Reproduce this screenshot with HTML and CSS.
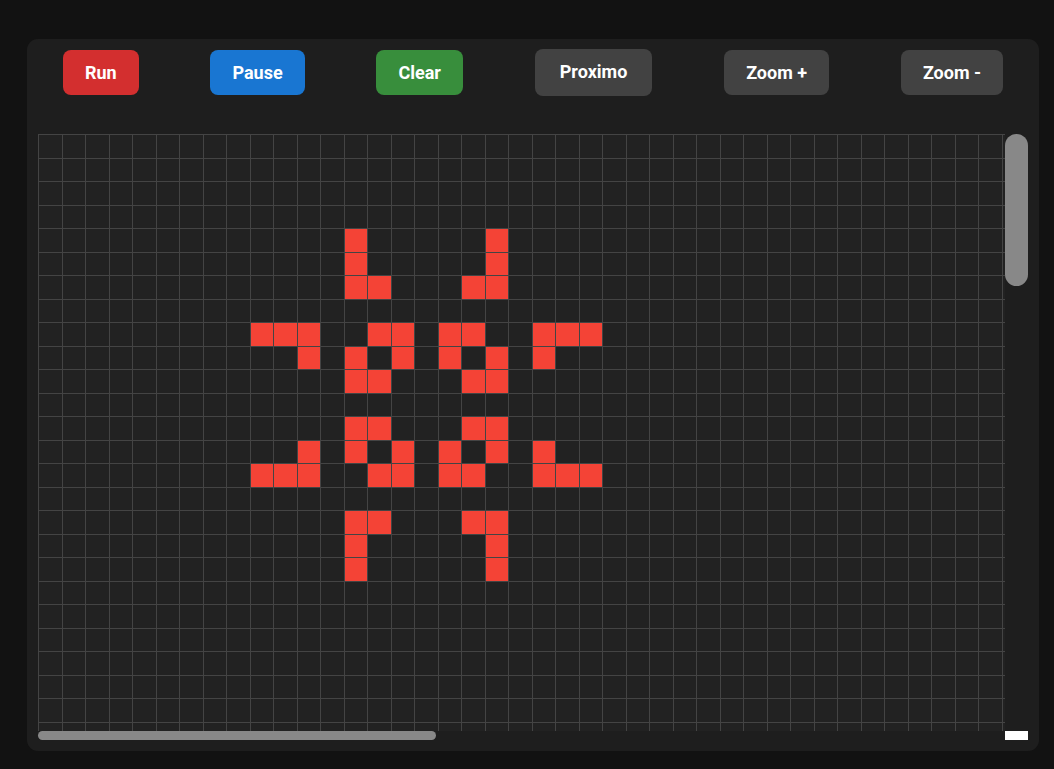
FILE: index.html
```html
<!DOCTYPE html>
<html lang="en">
<head>
<meta charset="utf-8">
<title>Game of Life</title>
<link rel="stylesheet" href="styles.css">
</head>
<body>
  <div class="app">
    <div class="toolbar">
      <button class="btn btn-run">Run</button>
      <button class="btn btn-pause">Pause</button>
      <button class="btn btn-clear">Clear</button>
      <button class="btn btn-dark btn-next">Proximo</button>
      <button class="btn btn-dark">Zoom +</button>
      <button class="btn btn-dark">Zoom -</button>
    </div>
    <div class="board-frame">
      <div class="board-view">
        <div class="board" id="board"></div>
      </div>
      <div class="vbar"><div class="vthumb"></div></div>
      <div class="hbar"><div class="hthumb"></div></div>
      <div class="corner"></div>
    </div>
  </div>
  <script src="script.js"></script>
</body>
</html>
```

FILE: styles.css
```css
html, body {
  margin: 0;
  background: #121212;
}

body {
  padding: 39px 15px 18px 27px;
  overflow: hidden;
  font-family: Roboto, "Liberation Sans", Arial, sans-serif;
}

.app {
  width: 1012px;
  height: 712px;
  box-sizing: border-box;
  padding: 11px;
  background: #1e1e1e;
  border-radius: 11px;
  display: flex;
  flex-direction: column;
}

.toolbar {
  margin: 0 -11px;
  height: 45px;
  display: flex;
  justify-content: space-around;
  align-items: center;
}

.btn {
  border: none;
  border-radius: 8px;
  color: #fff;
  font-family: Roboto, "Liberation Sans", Arial, sans-serif;
  font-weight: 700;
  font-size: 18px;
  line-height: 21px;
  padding: 12px 22px;
  cursor: pointer;
}

.btn-run { background: #d32f2f; }
.btn-pause { background: #1976d2; }
.btn-clear { background: #388e3c; }
.btn-dark { background: #424242; }

.btn-next {
  padding: 12px 25px 14px;
}

.board-frame {
  margin-top: 39px;
  flex: 1;
  min-height: 0;
  display: grid;
  grid-template-columns: 967px 23px;
  grid-template-rows: 597px 9px;
}

.board-view {
  overflow: hidden;
}

.vbar, .hbar {
  display: flex;
}

.vthumb {
  width: 23px;
  height: 152px;
  border-radius: 12px;
  background: #888;
}

.hthumb {
  width: 398px;
  height: 9px;
  border-radius: 5px;
  background: #888;
}

.corner {
  background: #fff;
}

.board {
  display: grid;
  grid-template-columns: repeat(100, 22.5px);
  grid-auto-rows: 22.5px;
  gap: 1px;
  padding: 1px 0 0 1px;
  width: max-content;
  background: #444;
}

.cell {
  background: #222;
}

.cell.alive {
  background: #f44336;
}
```

FILE: script.js
```js
(function () {
  var SIZE = 100;
  var pattern = {
    4: [13, 19],
    5: [13, 19],
    6: [13, 14, 18, 19],
    8: [9, 10, 11, 14, 15, 17, 18, 21, 22, 23],
    9: [11, 13, 15, 17, 19, 21],
    10: [13, 14, 18, 19],
    12: [13, 14, 18, 19],
    13: [11, 13, 15, 17, 19, 21],
    14: [9, 10, 11, 14, 15, 17, 18, 21, 22, 23],
    16: [13, 14, 18, 19],
    17: [13, 19],
    18: [13, 19]
  };
  var board = document.getElementById('board');
  var frag = document.createDocumentFragment();
  for (var r = 0; r < SIZE; r++) {
    var alive = pattern[r] || [];
    for (var c = 0; c < SIZE; c++) {
      var cell = document.createElement('div');
      cell.className = alive.indexOf(c) !== -1 ? 'cell alive' : 'cell';
      frag.appendChild(cell);
    }
  }
  board.appendChild(frag);
})();
```
